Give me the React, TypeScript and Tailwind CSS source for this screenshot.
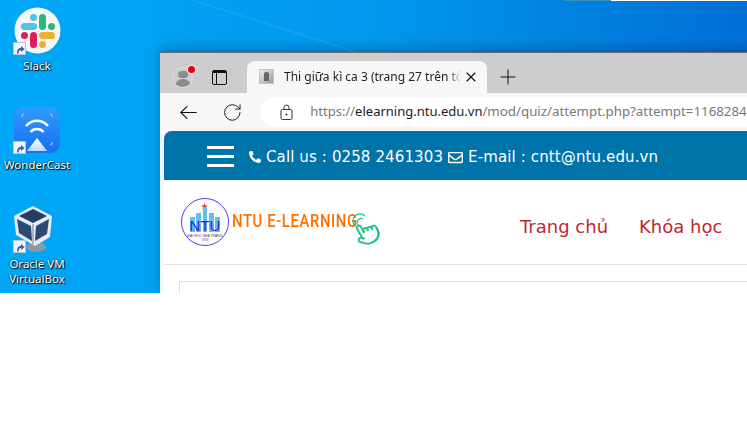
import React from 'react';
import { RotateCw, X, Plus, Pointer } from 'lucide-react';
import { FaPhoneAlt, FaRegEnvelope } from 'react-icons/fa';

function ShortcutArrow() {
  return (
    <div className="absolute left-0 bottom-0 w-[13px] h-[13px] bg-[#f2f4f8] border border-[#b8c4d4] flex items-center justify-center">
      <svg width="10" height="10" viewBox="0 0 10 10">
        <path d="M2 9.5 C2 5.5 3.5 4 6 4 L6 2 L9.5 5 L6 8 L6 6 C4.5 6 3.5 7 3.5 9.5 Z" fill="#2f5fa8" />
      </svg>
    </div>
  );
}

function SlackIcon() {
  return (
    <div className="relative w-[48px] h-[48px]">
      <svg width="47" height="47" viewBox="0 0 47 47" className="ml-[1px]">
        <circle cx="23.5" cy="23.5" r="23" fill="#f7f7f7" />
        <rect x="7" y="16" width="16" height="7" rx="3.5" fill="#4fc3e8" />
        <rect x="16" y="7" width="7" height="7" rx="3.5" fill="#4fc3e8" />
        <rect x="25" y="7" width="7" height="16" rx="3.5" fill="#2eb67d" />
        <rect x="34" y="16" width="7" height="7" rx="3.5" fill="#2eb67d" />
        <rect x="25" y="25" width="16" height="7" rx="3.5" fill="#ecb22e" />
        <rect x="25" y="34" width="7" height="7" rx="3.5" fill="#ecb22e" />
        <rect x="16" y="25" width="7" height="16" rx="3.5" fill="#e01e5a" />
        <rect x="7" y="25" width="7" height="7" rx="3.5" fill="#e01e5a" />
      </svg>
      <ShortcutArrow />
    </div>
  );
}

function WonderCastIcon() {
  return (
    <div className="relative w-[48px] h-[47px]">
      <svg width="46" height="46" viewBox="0 0 46 46" className="ml-[1px]">
        <defs>
          <linearGradient id="wc" x1="0" y1="0" x2="0" y2="1">
            <stop offset="0" stopColor="#2f9bff" />
            <stop offset="1" stopColor="#1a6ff0" />
          </linearGradient>
          <linearGradient id="wt" x1="0" y1="0" x2="0" y2="1">
            <stop offset="0" stopColor="#ffffff" />
            <stop offset="1" stopColor="#b5dcff" />
          </linearGradient>
        </defs>
        <rect width="46" height="46" rx="9" fill="url(#wc)" />
        <path d="M12 19 C18 12 28 12 34 19" fill="none" stroke="#fff" strokeWidth="2.6" />
        <path d="M16.5 25 C20 21 26 21 29.5 25" fill="none" stroke="#fff" strokeWidth="2.6" />
        <path d="M23 31 L33 44 L13 44 Z" fill="url(#wt)" />
        <path d="M8 10 L8 8 L10 7 M36 7 L38 8 L38 10 M38 35 L38 37 L36 38" fill="none" stroke="#cfe8ff" strokeWidth="0.8" />
      </svg>
      <ShortcutArrow />
    </div>
  );
}

function VirtualBoxIcon() {
  return (
    <div className="relative w-[48px] h-[48px]">
      <svg width="42" height="48" viewBox="0 0 42 48">
        <ellipse cx="23" cy="42" rx="10" ry="5" fill="#8d99a8" />
        <path d="M20 1 L39 11 L37 32 L22 41 L3 30 L1 11 Z" fill="#e6eaf2" />
        <path d="M20 4 L34 11 L20 18 L6 11 Z" fill="#243d63" />
        <path d="M4 14 L18 21 L19 36 L6 28 Z" fill="#2c4a73" />
        <path d="M36 14 L23 21 L22 36 L34 29 Z" fill="#2c4a73" />
        <path d="M20 19 L20 40" stroke="#aab4c6" strokeWidth="2" />
      </svg>
      <ShortcutArrow />
    </div>
  );
}

function DesktopIcon({ icon, label }: { icon: React.ReactNode; label: React.ReactNode }) {
  return (
    <div className="flex flex-col items-center w-[74px]">
      {icon}
      <div className="mt-[3px] text-center text-white text-[11.5px] leading-[15px] font-['Noto_Sans',sans-serif] [text-shadow:1px_1px_1px_#000,0_0_2px_#000]">
        {label}
      </div>
    </div>
  );
}

function NtuLogo() {
  return (
    <svg width="50" height="50" viewBox="0 0 50 50">
      <circle cx="25" cy="25" r="23.5" fill="#fff" stroke="#5b3ce6" strokeWidth="1" />
      <path d="M24.5 6 L25.4 8.4 L27.8 8.4 L25.9 9.9 L26.6 12 L24.5 10.8 L22.4 12 L23.1 9.9 L21.2 8.4 L23.6 8.4 Z" fill="#e0392d" />
      <rect x="10" y="20" width="5" height="15" fill="#62bdf0" />
      <rect x="16" y="16" width="5" height="19" fill="#62bdf0" />
      <rect x="23" y="10" width="4" height="25" fill="#62bdf0" />
      <rect x="29" y="16" width="5" height="19" fill="#62bdf0" />
      <rect x="35" y="20" width="5" height="15" fill="#62bdf0" />
      <text x="25" y="34" textAnchor="middle" fontFamily="Liberation Sans, sans-serif" fontSize="15" fill="#2a22d8">NTU</text>
      <text x="25" y="39.5" textAnchor="middle" fontFamily="Liberation Sans, sans-serif" fontSize="3.4" fill="#3a3a7a">ĐẠI HỌC NHA TRANG</text>
      <text x="25" y="44" textAnchor="middle" fontFamily="Liberation Sans, sans-serif" fontSize="3" fill="#3a3a7a">1959</text>
    </svg>
  );
}

function BrowserWindow() {
  return (
    <div className="absolute left-[160px] top-[52px] w-[640px] h-[241px] flex flex-col border-t border-[#666a70] bg-[#cdcdcd] shadow-[0_-4px_10px_rgba(0,40,90,0.35)] overflow-hidden">
      {/* tab strip */}
      <div className="h-[40px] shrink-0 flex items-end">
        <div className="w-[87px] h-full flex items-center pl-[12px] pt-[8px]">
          <div className="relative w-[21px] h-[21px] rounded-full border border-[#dcdcdc] flex flex-col items-center overflow-hidden">
            <div className="w-[10px] h-[10px] rounded-full bg-[#8c8c8c] mt-[3px]" />
            <div className="w-[16px] h-[10px] rounded-t-full bg-[#8c8c8c] mt-[1px]" />
          </div>
          <div className="w-[7px] h-[7px] rounded-full bg-[#e8000f] -ml-[5px] -mt-[15px] z-10 ring-1 ring-[#e6e6e6]" />
          <div className="ml-[17px] w-[15px] h-[15px] border-[1.5px] border-[#111] rounded-[2px] flex flex-col">
            <div className="h-[2px] bg-[#111] shrink-0" />
            <div className="w-[4px] grow border-r-[1.5px] border-[#111]" />
          </div>
        </div>
        <div className="w-[240px] h-[32px] bg-[#f7f7f7] rounded-t-[8px] flex items-center pl-[12px] pb-[1px]">
          <div className="w-[15px] h-[15px] bg-gradient-to-br from-[#f0f0f0] to-[#9a9a9a] border border-[#c4c4c4] flex items-center justify-center">
            <div className="w-[5px] h-[9px] bg-[#666] rounded-t-[2px]" />
          </div>
          <span className="ml-[10px] w-[177px] whitespace-nowrap overflow-hidden text-[12px] text-[#1f1f1f] font-['Noto_Sans',sans-serif] [mask-image:linear-gradient(to_right,#000_93%,transparent)]">
            Thi giữa kì ca 3 (trang 27 trên tổng
          </span>
          <X size={16} strokeWidth={1.6} className="ml-[2px] text-[#111]" />
        </div>
        <Plus size={24} strokeWidth={1} className="ml-[9px] mb-[4px] text-[#111]" />
      </div>
      {/* toolbar */}
      <div className="h-[38px] shrink-0 bg-[#f7f7f7] flex items-center pl-[20px]">
        <svg width="17" height="15" viewBox="0 0 17 15" fill="none" stroke="#111" strokeWidth="1.1">
          <path d="M0.8 7.5 H17 M7.5 1 L0.8 7.5 L7.5 14" />
        </svg>
        <RotateCw size={21} strokeWidth={1.1} className="ml-[25px] text-[#111]" />
        <div className="ml-[18px] grow h-[30px] bg-white rounded-l-full flex items-center pl-[20px] whitespace-nowrap overflow-hidden font-['Noto_Sans',sans-serif] text-[13px]">
          <svg width="13" height="16" viewBox="0 0 13 16" fill="none" stroke="#333" strokeWidth="1" className="shrink-0">
            <rect x="1" y="5.5" width="11" height="10" rx="1.5" />
            <path d="M4 5.5 V3.5 A2.5 2.5 0 0 1 9 3.5 V5.5" />
            <circle cx="6.5" cy="10.5" r="1" fill="#333" stroke="none" />
          </svg>
          <span className="ml-[17px] text-[#777]">https://</span>
          <span className="text-[#1c1c1c]">elearning.ntu.edu.vn</span>
          <span className="text-[#777] text-[13.3px]">/mod/quiz/attempt.php?attempt=1168284&amp;cmid=92</span>
        </div>
      </div>
      {/* page */}
      <div className="grow bg-[#f7f7f7] pl-[4px] flex flex-col min-h-0">
        <div className="h-[49px] shrink-0 bg-[#0073a8] rounded-tl-[8px] flex items-center pl-[43px] text-white font-['DejaVu_Sans',sans-serif] text-[15px] tracking-[0.12px]">
          <div className="w-[27px] mt-[1px] flex flex-col gap-[6px]">
            <div className="h-[3px] bg-white" />
            <div className="h-[3px] bg-white" />
            <div className="h-[3px] bg-white" />
          </div>
          <FaPhoneAlt size={12} className="ml-[15px] mt-[2px]" />
          <span className="ml-[5px] mt-[4px] whitespace-nowrap">Call us : 0258 2461303</span>
          <FaRegEnvelope size={15} className="ml-[5px] mt-[3px]" />
          <span className="ml-[5px] mt-[4px] whitespace-nowrap">E-mail : cntt@ntu.edu.vn</span>
        </div>
        <div className="h-[85px] shrink-0 bg-white border-b border-[#e2e2e2] flex items-center pl-[16px] relative">
          <NtuLogo />
          <div className="ml-[2px] -mt-[2px] w-[125px]">
            <span className="inline-block origin-left scale-x-[0.78] text-[#ff6f00] font-['Roboto',sans-serif] font-medium text-[19px] tracking-[0.8px] whitespace-nowrap">
              NTU E-LEARNING
            </span>
          </div>
          <svg width="18" height="18" viewBox="0 0 18 18" fill="none" stroke="#22c38e" strokeWidth="1.2" className="absolute left-[188px] top-[33px]">
            <path d="M3 13 A7 7 0 0 1 13 3" />
            <path d="M6 12 A4 4 0 0 1 11 6" />
          </svg>
          <Pointer size={26} strokeWidth={1.8} className="absolute left-[190px] top-[40px] -rotate-[30deg] text-[#22c38e]" />
          <div className="ml-[163px] mt-[9px] flex gap-[31px] text-[18px] text-[#c1272d] font-['DejaVu_Sans',sans-serif] whitespace-nowrap">
            <span>Trang chủ</span>
            <span>Khóa học</span>
          </div>
        </div>
        <div className="grow bg-white pl-[15px] pt-[16px] min-h-0">
          <div className="h-full border-l border-t border-[#dedede]" />
        </div>
      </div>
    </div>
  );
}

export default function App() {
  return (
    <div className="w-[747px] h-[440px] bg-white overflow-hidden">
      <div className="relative h-[293px] overflow-hidden bg-gradient-to-r from-[#00a8f8] via-[#0098ec] to-[#006fd6]">
        <svg className="absolute left-0 top-0" width="747" height="60">
          <line x1="192" y1="0" x2="375" y2="58" stroke="#2cb0f8" strokeWidth="2" opacity="0.4" />
        </svg>
        <div className="absolute left-[563px] top-0 w-[48px] h-[1px] bg-[#3a8fb8]" />
        <div className="absolute left-[611px] top-0 w-[136px] h-[1px] bg-white" />
        <div className="pt-[7px] flex flex-col">
          <DesktopIcon icon={<SlackIcon />} label="Slack" />
          <div className="mt-[34px]">
            <DesktopIcon icon={<WonderCastIcon />} label="WonderCast" />
          </div>
          <div className="mt-[33px]">
            <DesktopIcon icon={<VirtualBoxIcon />} label={<>Oracle VM<br />VirtualBox</>} />
          </div>
        </div>
        <BrowserWindow />
      </div>
    </div>
  );
}
